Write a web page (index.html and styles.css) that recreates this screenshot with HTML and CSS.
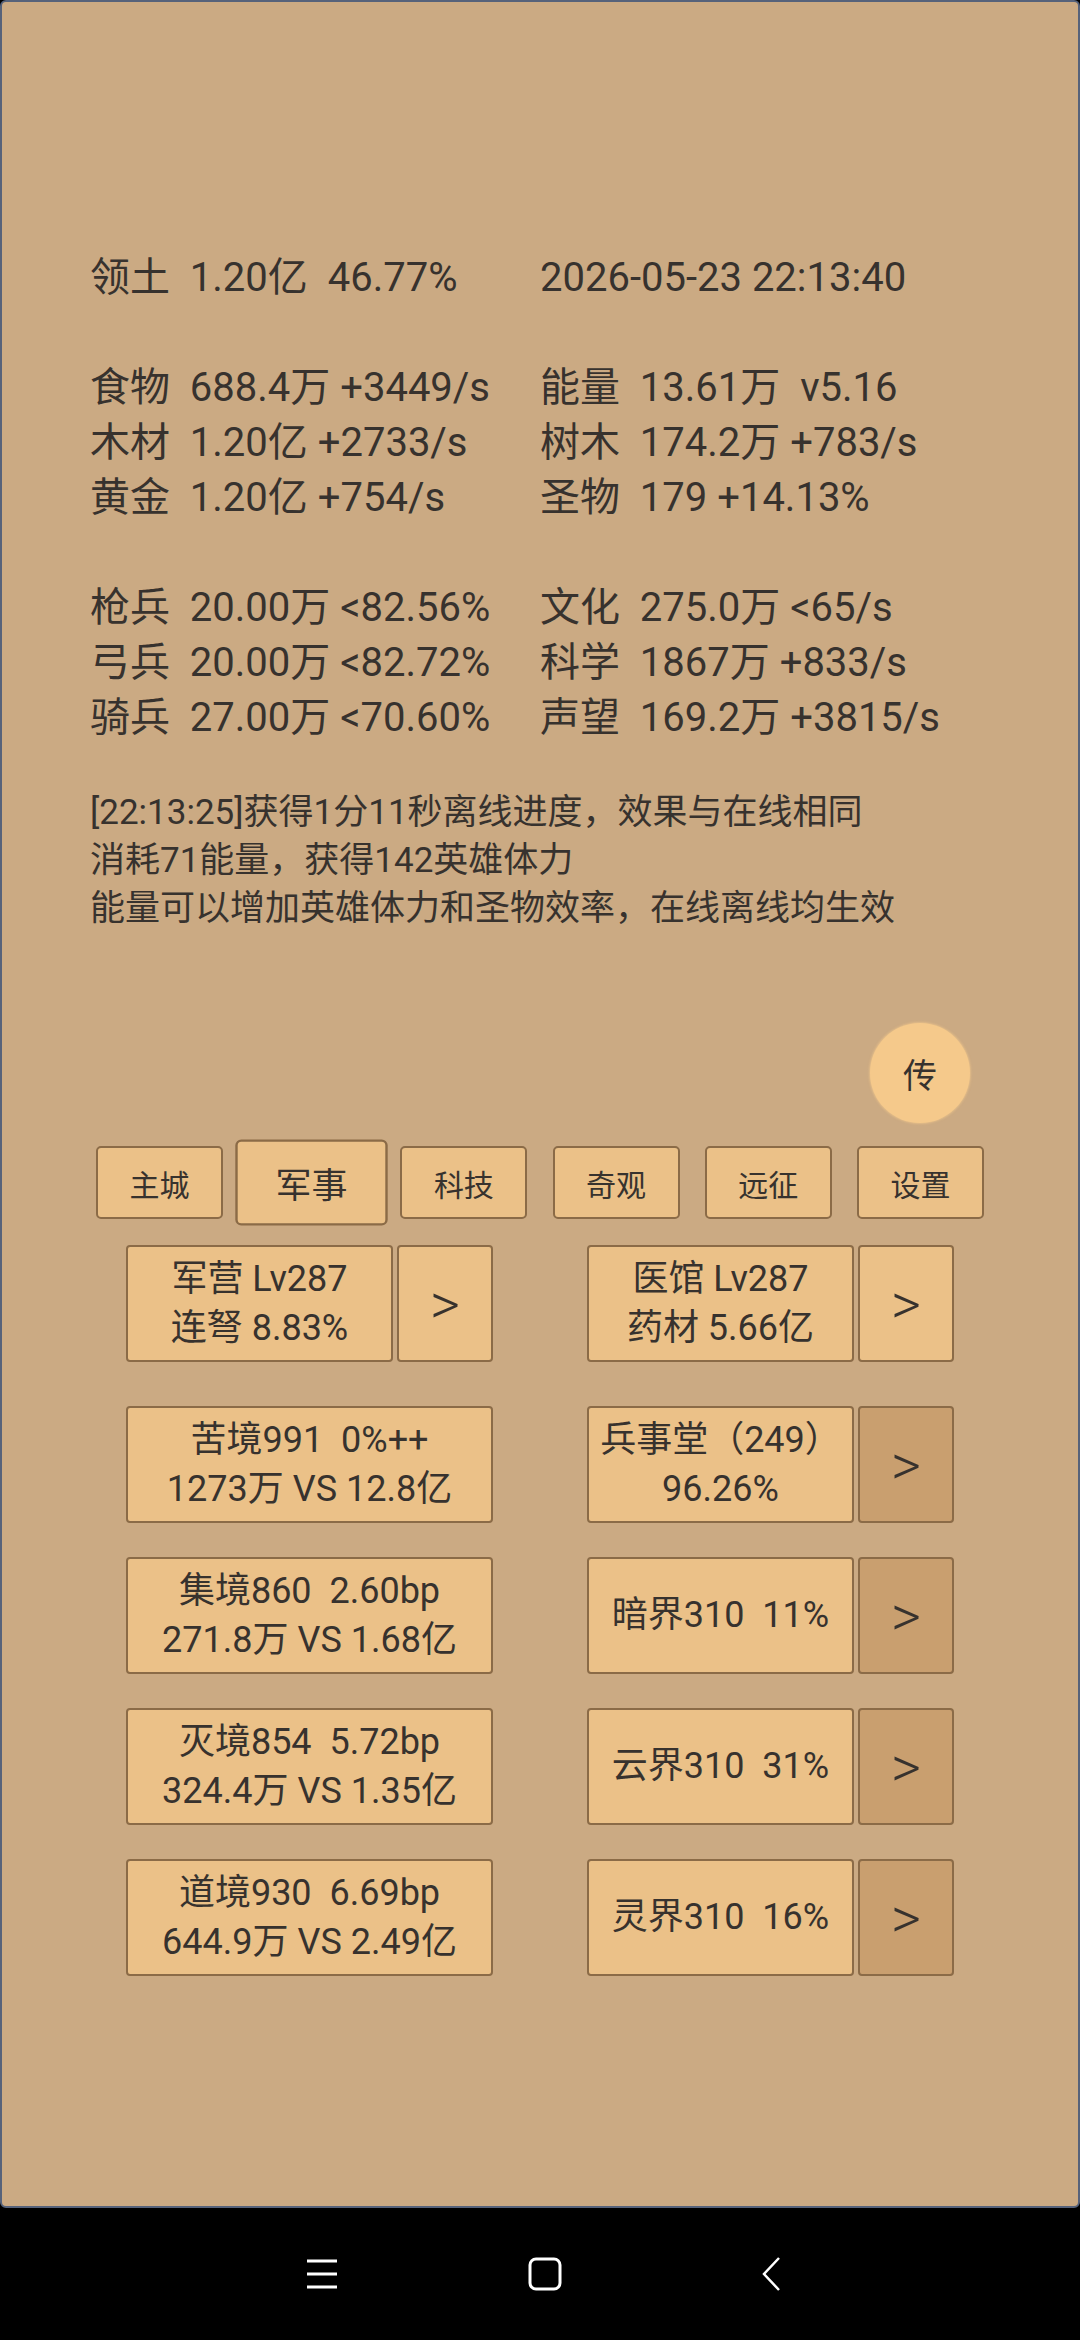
FILE: index.html
```html
<!DOCTYPE html>
<html>

<head>
  <meta charset="utf-8">
  <title>领土</title>
  <link rel="stylesheet" href="styles.css">
</head>

<body>
  <div class="screen">
    <div class="stats">
      <span>领土  1.20亿  46.77%</span><span>2026-05-23 22:13:40</span>
      <span class="blank"></span>
      <span>食物  688.4万 +3449/s</span><span>能量  13.61万  v5.16</span>
      <span>木材  1.20亿 +2733/s</span><span>树木  174.2万 +783/s</span>
      <span>黄金  1.20亿 +754/s</span><span>圣物  179 +14.13%</span>
      <span class="blank"></span>
      <span>枪兵  20.00万 &lt;82.56%</span><span>文化  275.0万 &lt;65/s</span>
      <span>弓兵  20.00万 &lt;82.72%</span><span>科学  1867万 +833/s</span>
      <span>骑兵  27.00万 &lt;70.60%</span><span>声望  169.2万 +3815/s</span>
    </div>

    <div class="log">
      <p>[22:13:25]获得1分11秒离线进度，效果与在线相同</p>
      <p>消耗71能量，获得142英雄体力</p>
      <p>能量可以增加英雄体力和圣物效率，在线离线均生效</p>
    </div>

    <div class="float-row">
      <div class="round-btn">传</div>
    </div>

    <div class="tabs">
      <div class="tab">主城</div>
      <div class="tab active">军事</div>
      <div class="tab">科技</div>
      <div class="tab">奇观</div>
      <div class="tab">远征</div>
      <div class="tab">设置</div>
    </div>

    <div class="buildings">
      <div class="b-row first">
        <div class="cell">
          <div class="box"><span>军营 Lv287</span><span>连弩 8.83%</span></div>
          <div class="arrow">&gt;</div>
        </div>
        <div class="cell">
          <div class="box"><span>医馆 Lv287</span><span>药材 5.66亿</span></div>
          <div class="arrow">&gt;</div>
        </div>
      </div>

      <div class="b-row">
        <div class="cell">
          <div class="box"><span>苦境991  0%++</span><span>1273万 VS 12.8亿</span></div>
        </div>
        <div class="cell">
          <div class="box"><span>兵事堂（249）</span><span>96.26%</span></div>
          <div class="arrow dark">&gt;</div>
        </div>
      </div>

      <div class="b-row">
        <div class="cell">
          <div class="box"><span>集境860  2.60bp</span><span>271.8万 VS 1.68亿</span></div>
        </div>
        <div class="cell">
          <div class="box"><span>暗界310  11%</span></div>
          <div class="arrow dark">&gt;</div>
        </div>
      </div>

      <div class="b-row">
        <div class="cell">
          <div class="box"><span>灭境854  5.72bp</span><span>324.4万 VS 1.35亿</span></div>
        </div>
        <div class="cell">
          <div class="box"><span>云界310  31%</span></div>
          <div class="arrow dark">&gt;</div>
        </div>
      </div>

      <div class="b-row">
        <div class="cell">
          <div class="box"><span>道境930  6.69bp</span><span>644.9万 VS 2.49亿</span></div>
        </div>
        <div class="cell">
          <div class="box"><span>灵界310  16%</span></div>
          <div class="arrow dark">&gt;</div>
        </div>
      </div>
    </div>
  </div>

  <div class="navbar">
    <svg class="nav-menu" width="32" height="32" viewBox="0 0 32 32">
      <path d="M1 3H31M1 16H31M1 29H31" stroke="#fff" stroke-width="3" fill="none" />
    </svg>
    <svg class="nav-home" width="34" height="34" viewBox="0 0 34 34">
      <rect x="2" y="2" width="30" height="30" rx="6" stroke="#fff" stroke-width="3" fill="none" />
    </svg>
    <svg class="nav-back" width="22" height="34" viewBox="0 0 22 34">
      <path d="M19 1L4 17L19 33" stroke="#fff" stroke-width="2.5" fill="none" />
    </svg>
  </div>
</body>

</html>
```

FILE: styles.css
```css
body {
  margin: 0;
  background-color: #000000;
  font-family: Roboto, "Noto Sans CJK SC", sans-serif;
  color: #37322e;
}

.screen {
  height: 2208px;
  box-sizing: border-box;
  background-color: #cbaa83;
  border: 2px solid #56627a;
  border-radius: 6px;
  padding-top: 248px;
  overflow: hidden;
}

.stats {
  display: grid;
  grid-template-columns: 450px 1fr;
  padding-left: 88px;
  font-size: 40px;
  line-height: 55px;
  white-space: pre;
}

.stats .blank {
  grid-column: 1 / 3;
  height: 55px;
}

.log {
  margin-top: 44px;
  padding-left: 88px;
  font-size: 35px;
  line-height: 48px;
}

.log p {
  margin: 0;
}

.float-row {
  display: flex;
  justify-content: flex-end;
  padding-right: 108px;
  margin-top: 90px;
}

.round-btn {
  width: 100px;
  height: 100px;
  border-radius: 50%;
  background-color: #f5c98b;
  box-shadow: 0 0 2px 1px rgba(245, 201, 139, 0.6);
  display: flex;
  align-items: center;
  justify-content: center;
  font-size: 34px;
}

.tabs {
  display: grid;
  grid-template-columns: repeat(6, 127px);
  column-gap: 25.2px;
  padding-left: 94px;
  margin-top: 23px;
}

.tab {
  height: 73px;
  box-sizing: border-box;
  background-color: #ebc188;
  border: 2px solid #8b6b47;
  border-radius: 5px;
  display: flex;
  align-items: center;
  justify-content: center;
  font-size: 30px;
}

.tab.active {
  transform: scale(1.2, 1.18);
}

.buildings {
  display: flex;
  flex-direction: column;
  gap: 34px;
  margin-top: 26px;
}

.b-row {
  display: grid;
  grid-template-columns: 367px 367px;
  column-gap: 94px;
  justify-content: center;
}

.b-row.first {
  margin-bottom: 10px;
}

.cell {
  display: flex;
  gap: 4px;
  height: 117px;
}

.box {
  flex: 1;
  box-sizing: border-box;
  background-color: #ebc188;
  border: 2px solid #8b6b47;
  border-radius: 4px;
  display: flex;
  flex-direction: column;
  align-items: center;
  justify-content: center;
  font-size: 36px;
  line-height: 49px;
  white-space: pre;
}

.arrow {
  width: 96px;
  box-sizing: border-box;
  background-color: #ebc188;
  border: 2px solid #8b6b47;
  border-radius: 4px;
  display: flex;
  align-items: center;
  justify-content: center;
  font-size: 58px;
  font-weight: 300;
}

.arrow.dark {
  background-color: #c99f6f;
}

.navbar {
  height: 132px;
  display: flex;
  align-items: center;
  justify-content: center;
  gap: 190px;
  padding-left: 8px;
}

.nav-back {
  margin-left: 8px;
}
```
